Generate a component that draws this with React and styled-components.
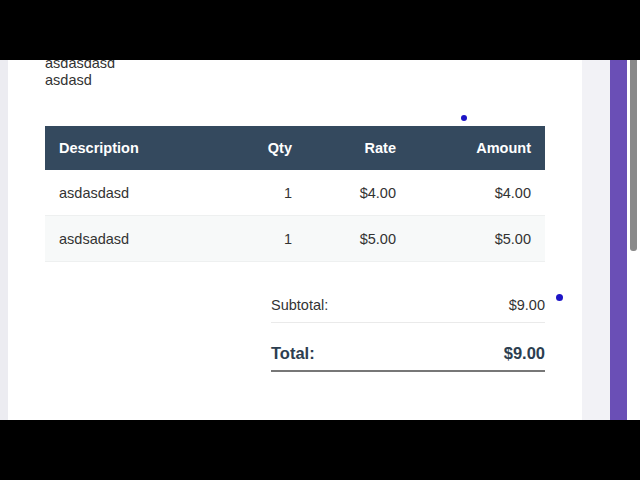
import React from "react";
import styled, { createGlobalStyle } from "styled-components";

const Global = createGlobalStyle`
  html, body { margin: 0; padding: 0; background: #000; }
  body { font-family: "Liberation Sans", Arial, sans-serif; }
`;

const items = [
  { description: "asdasdasd", qty: 1, rate: 4 },
  { description: "asdsadasd", qty: 1, rate: 5 },
];

const money = (n) => `$${n.toFixed(2)}`;

const Frame = styled.div`
  width: 640px;
  height: 480px;
  display: flex;
  flex-direction: column;
  background: #000;
`;

const Letterbox = styled.div`
  height: 60px;
  flex: none;
  background: #000;
`;

const Viewport = styled.div`
  position: relative;
  height: 360px;
  display: flex;
  overflow: hidden;
  background: #f2f2f6;
`;

const Gutter = styled.div`
  width: ${(p) => p.w}px;
  flex: none;
  background: ${(p) => p.bg};
`;

const Card = styled.div`
  width: 574px;
  flex: none;
  background: #fff;
  padding: 0 37px;
  box-sizing: border-box;
`;

const Address = styled.div`
  margin-top: -5px;
  font-size: 14.5px;
  line-height: 17px;
  color: #333;
`;

const Table = styled.table`
  width: 500px;
  margin-top: 37px;
  border-collapse: collapse;
  font-size: 14.5px;
  color: #333;
`;

const Th = styled.th`
  height: 44px;
  padding: 0 14px;
  background: #34495e;
  color: #fff;
  font-weight: bold;
  text-align: ${(p) => p.align || "left"};
  width: ${(p) => (p.w ? `${p.w}px` : "auto")};
  box-sizing: border-box;
`;

const Tr = styled.tr`
  background: ${(p) => (p.alt ? "#f7f9f9" : "#fff")};
  border-bottom: 1px solid #eef0f0;
`;

const Td = styled.td`
  height: 45px;
  padding: 0 14px;
  text-align: ${(p) => p.align || "left"};
`;

const Totals = styled.div`
  width: 274px;
  margin: 26px 0 0 226px;
  color: #333;
`;

const SubRow = styled.div`
  display: flex;
  justify-content: space-between;
  padding: 8px 0;
  font-size: 14.5px;
  line-height: 18px;
  border-bottom: 1px solid #eaeaea;
`;

const TotalRow = styled.div`
  display: flex;
  justify-content: space-between;
  margin-top: 8px;
  padding: 12px 0 7px;
  font-size: 16.5px;
  line-height: 20px;
  font-weight: bold;
  color: #2c3e50;
  border-bottom: 2px solid #777;
`;

const Scrollbar = styled.div`
  width: 12px;
  flex: none;
  background: #fff;
  padding: 0 3px 0 2px;
  box-sizing: border-box;
`;

const Thumb = styled.div`
  height: 191px;
  background: #8a8a8a;
  border-radius: 0 0 3px 3px;
`;

const Dot = styled.span`
  position: absolute;
  left: ${(p) => p.x}px;
  top: ${(p) => p.y}px;
  width: ${(p) => p.s}px;
  height: ${(p) => p.s}px;
  border-radius: 50%;
  background: #1d14c6;
`;

export default function App() {
  const subtotal = items.reduce((s, i) => s + i.qty * i.rate, 0);
  return (
    <Frame>
      <Global />
      <Letterbox />
      <Viewport>
        <Gutter w={8} bg="#ececf1" />
        <Card>
          <Address>
            <div>asdasdasd</div>
            <div>asdasd</div>
          </Address>
          <Table>
            <thead>
              <tr>
                <Th>Description</Th>
                <Th align="right" w={80}>Qty</Th>
                <Th align="right" w={104}>Rate</Th>
                <Th align="right" w={135}>Amount</Th>
              </tr>
            </thead>
            <tbody>
              {items.map((item, i) => (
                <Tr key={i} alt={i % 2 === 1}>
                  <Td>{item.description}</Td>
                  <Td align="right">{item.qty}</Td>
                  <Td align="right">{money(item.rate)}</Td>
                  <Td align="right">{money(item.qty * item.rate)}</Td>
                </Tr>
              ))}
            </tbody>
          </Table>
          <Totals>
            <SubRow>
              <span>Subtotal:</span>
              <span>{money(subtotal)}</span>
            </SubRow>
            <TotalRow>
              <span>Total:</span>
              <span>{money(subtotal)}</span>
            </TotalRow>
          </Totals>
        </Card>
        <Gutter w={28} bg="#f2f2f6" />
        <Gutter w={17} bg="#6a4fb6" />
        <Gutter w={1} bg="#fff" />
        <Scrollbar>
          <Thumb />
        </Scrollbar>
        <Dot x={461} y={55} s={6} />
        <Dot x={556} y={234} s={7} />
      </Viewport>
      <Letterbox />
    </Frame>
  );
}
